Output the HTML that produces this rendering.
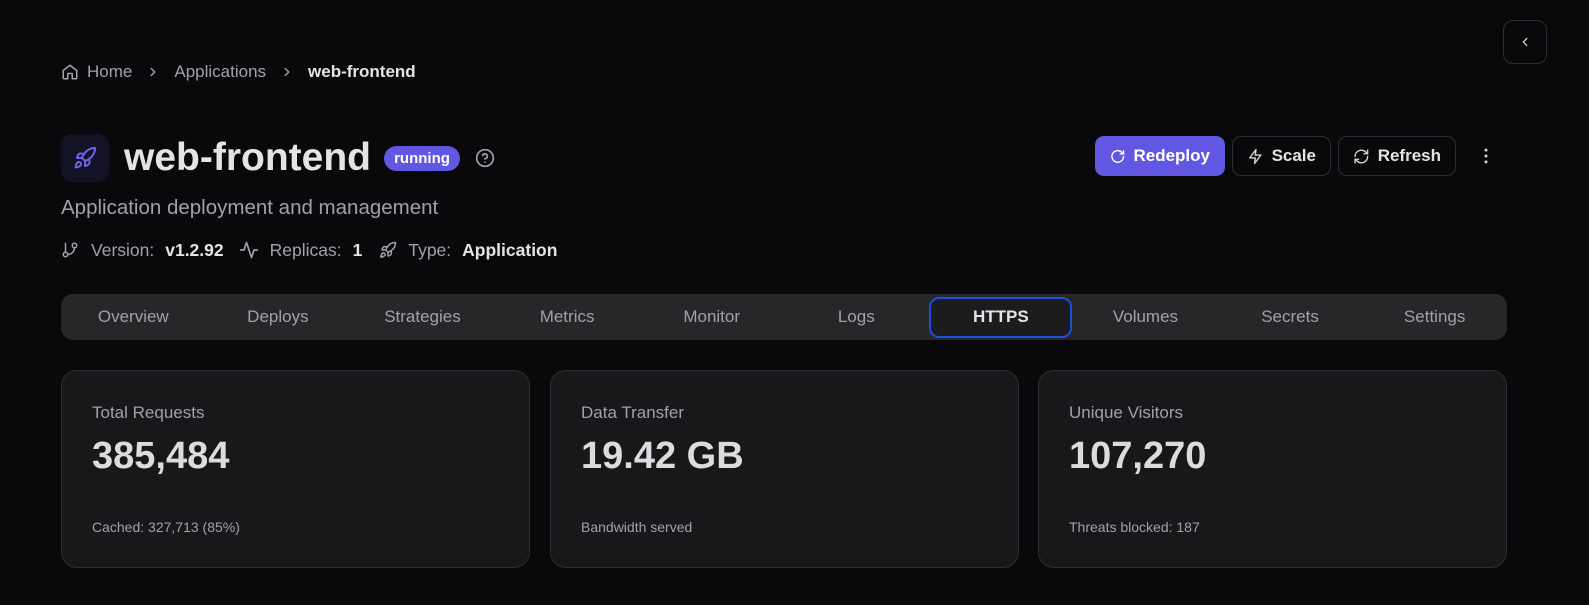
<!DOCTYPE html>
<html><head><meta charset="utf-8"><style>
*{box-sizing:border-box;margin:0;padding:0}
body{width:1589px;height:605px;background:#09090b;font-family:"Liberation Sans",Arial,sans-serif;color:#e4e4e7;position:relative;overflow:hidden}
.abs{position:absolute}
svg{display:block}
.crumb{left:61px;top:61px;height:22px;display:flex;align-items:center;font-size:17px;color:#a1a1aa}
.crumb b{color:#e4e4e7}
.btn{position:absolute;top:136px;height:40px;border:1px solid #2e2e33;border-radius:9px;display:flex;align-items:center;gap:8px;padding:0 14px;font-size:17px;font-weight:bold;color:#e4e4e7}
.tabs{left:61px;top:294px;width:1446px;height:46px;background:#27272a;border-radius:12px;display:flex;align-items:center}
.tab{width:144.6px;height:46px;line-height:46px;text-align:center;font-size:17px;color:#a1a1aa;position:relative}
.tab.act{color:#e4e4e7;font-weight:bold}
.act .ring{position:absolute;left:0;top:3px;width:143px;height:41px;border:2px solid #1d4ed8;border-radius:10px;background:#1c1c1f}
.card{top:370px;height:198px;width:469px;background:#18181b;border:1px solid #2e2e33;border-radius:16px}
.card .l{position:absolute;left:30px;top:32px;font-size:17px;color:#a1a1aa}
.card .v{position:absolute;left:30px;top:64px;font-size:38px;font-weight:bold;color:#dcdcdf}
.card .s{position:absolute;left:30px;top:148px;font-size:14px;color:#a1a1aa}
</style></head><body>
<div class="abs" style="left:1503px;top:20px;width:44px;height:44px;border:1px solid #2e2e33;border-radius:10px;display:flex;align-items:center;justify-content:center">
<svg width="14" height="14" viewBox="0 0 24 24" fill="none" stroke="#d4d4d8" stroke-width="2.2" stroke-linecap="round"><path d="M15 6l-6 6 6 6"/></svg></div>

<div class="abs crumb">
<svg width="18" height="18" viewBox="0 0 24 24" fill="none" stroke="#a1a1aa" stroke-width="2" stroke-linejoin="round"><path d="M3 10l9-7 9 7v10a1 1 0 0 1-1 1h-5v-7h-6v7H4a1 1 0 0 1-1-1z"/></svg>
<span style="margin-left:8px">Home</span>
<svg style="margin:0 14px" width="14" height="14" viewBox="0 0 24 24" fill="none" stroke="#a1a1aa" stroke-width="2.4" stroke-linecap="round"><path d="M9 6l6 6-6 6"/></svg>
<span>Applications</span>
<svg style="margin:0 14px" width="14" height="14" viewBox="0 0 24 24" fill="none" stroke="#a1a1aa" stroke-width="2.4" stroke-linecap="round"><path d="M9 6l6 6-6 6"/></svg>
<b>web-frontend</b></div>

<div class="abs" style="left:61px;top:134px;width:48px;height:48px;background:#141326;border-radius:11px;display:flex;align-items:center;justify-content:center">
<svg width="24" height="24" viewBox="0 0 24 24" fill="none" stroke="#6d63e8" stroke-width="2" stroke-linecap="round" stroke-linejoin="round"><path d="M4.5 16.5c-1.5 1.3-2 5-2 5s3.7-.5 5-2c.7-.8.7-2.1-.1-2.9a2.2 2.2 0 0 0-2.9-.1z"/><path d="M12 15l-3-3a22 22 0 0 1 2-3.9A12.9 12.9 0 0 1 22 2c0 2.7-.8 7.5-6 11a22 22 0 0 1-4 2z"/><path d="M9 12H4s.6-3 2-4c1.6-1.1 5 0 5 0"/><path d="M12 15v5s3-.6 4-2c1.1-1.6 0-5 0-5"/></svg></div>
<div class="abs" style="left:124px;top:134px;font-size:39px;font-weight:bold;color:#e4e4e7;line-height:48px">web-frontend</div>
<div class="abs" style="left:384px;top:146px;width:76px;height:25px;background:#6157e3;border-radius:13px;color:#fff;font-size:15px;font-weight:bold;text-align:center;line-height:25px">running</div>
<svg class="abs" style="left:475px;top:148px" width="20" height="20" viewBox="0 0 24 24" fill="none" stroke="#a1a1aa" stroke-width="2" stroke-linecap="round"><circle cx="12" cy="12" r="10"/><path d="M9.1 9a3 3 0 0 1 5.8 1c0 2-3 3-3 3"/><path d="M12 17h.01"/></svg>
<div class="abs" style="left:61px;top:196px;font-size:20.5px;color:#a1a1aa">Application deployment and management</div>
<div class="abs" style="left:61px;top:239px;display:flex;align-items:center;font-size:17.5px;color:#a1a1aa;height:22px">
<svg width="18" height="18" viewBox="0 0 24 24" fill="none" stroke="#a1a1aa" stroke-width="2" stroke-linecap="round"><circle cx="6" cy="18" r="3"/><circle cx="18" cy="6" r="3"/><path d="M6 3v12"/><path d="M18 9a9 9 0 0 1-9 9"/></svg>
<span style="margin-left:12px">Version:</span><b style="margin-left:11px;color:#e4e4e7">v1.2.92</b>
<svg style="margin-left:15px" width="20" height="20" viewBox="0 0 24 24" fill="none" stroke="#a1a1aa" stroke-width="2" stroke-linecap="round" stroke-linejoin="round"><path d="M22 12h-4l-3 9L9 3l-3 9H2"/></svg>
<span style="margin-left:11px">Replicas:</span><b style="margin-left:11px;color:#e4e4e7">1</b>
<svg style="margin-left:17px" width="18" height="18" viewBox="0 0 24 24" fill="none" stroke="#a1a1aa" stroke-width="2" stroke-linecap="round" stroke-linejoin="round"><path d="M4.5 16.5c-1.5 1.3-2 5-2 5s3.7-.5 5-2c.7-.8.7-2.1-.1-2.9a2.2 2.2 0 0 0-2.9-.1z"/><path d="M12 15l-3-3a22 22 0 0 1 2-3.9A12.9 12.9 0 0 1 22 2c0 2.7-.8 7.5-6 11a22 22 0 0 1-4 2z"/><path d="M9 12H4s.6-3 2-4c1.6-1.1 5 0 5 0"/><path d="M12 15v5s3-.6 4-2c1.1-1.6 0-5 0-5"/></svg>
<span style="margin-left:11px">Type:</span><b style="margin-left:11px;color:#e4e4e7">Application</b></div>

<div class="btn" style="left:1095px;width:130px;background:#6157e3;border-color:#6157e3;color:#fff">
<svg width="19" height="19" viewBox="0 0 24 24" fill="none" stroke="#fff" stroke-width="2.2" stroke-linecap="round"><path d="M21 12a9 9 0 1 1-2.6-6.4L21 8"/><path d="M21 3v5h-5"/></svg>Redeploy</div>
<div class="btn" style="left:1232px;width:99px">
<svg width="19" height="19" viewBox="0 0 24 24" fill="none" stroke="#d4d4d8" stroke-width="2" stroke-linejoin="round"><path d="M13 2L4 14h8l-1 8 9-12h-8z"/></svg>Scale</div>
<div class="btn" style="left:1338px;width:118px">
<svg width="19" height="19" viewBox="0 0 24 24" fill="none" stroke="#d4d4d8" stroke-width="2" stroke-linecap="round"><path d="M3 12a9 9 0 0 1 15-6.7L21 8"/><path d="M21 3v5h-5"/><path d="M21 12a9 9 0 0 1-15 6.7L3 16"/><path d="M8 16H3v5"/></svg>Refresh</div>
<svg class="abs" style="left:1476px;top:146px" width="20" height="20" viewBox="0 0 24 24" fill="#d4d4d8"><circle cx="12" cy="5" r="1.8"/><circle cx="12" cy="12" r="1.8"/><circle cx="12" cy="19" r="1.8"/></svg>

<div class="abs tabs">
<div class="tab">Overview</div><div class="tab">Deploys</div><div class="tab">Strategies</div><div class="tab">Metrics</div><div class="tab">Monitor</div><div class="tab">Logs</div>
<div class="tab act"><div class="ring"></div><span style="position:relative">HTTPS</span></div>
<div class="tab">Volumes</div><div class="tab">Secrets</div><div class="tab">Settings</div></div>

<div class="abs card" style="left:61px"><div class="l">Total Requests</div><div class="v">385,484</div><div class="s">Cached: 327,713 (85%)</div></div>
<div class="abs card" style="left:550px"><div class="l">Data Transfer</div><div class="v">19.42 GB</div><div class="s">Bandwidth served</div></div>
<div class="abs card" style="left:1038px"><div class="l">Unique Visitors</div><div class="v">107,270</div><div class="s">Threats blocked: 187</div></div>
</body></html>
